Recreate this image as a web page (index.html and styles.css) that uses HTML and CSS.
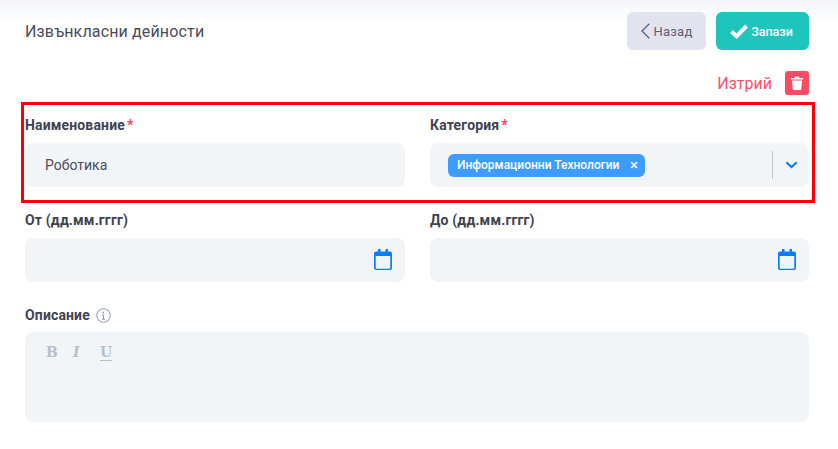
FILE: index.html
```html
<!DOCTYPE html>
<html lang="bg">
<head>
<meta charset="utf-8">
<title>Извънкласни дейности</title>
<link rel="stylesheet" href="styles.css">
</head>
<body>
<div class="page">
  <header class="top">
    <h1 class="title">Извънкласни дейности</h1>
    <div class="actions">
      <button class="btn btn-back" type="button">
        <svg width="9" height="16" viewBox="0 0 9 16"><path d="M8.300.8 1 8l7.300 7.200" fill="none" stroke="#5d5f70" stroke-width="1.300"/></svg>
        <span>Назад</span>
      </button>
      <button class="btn btn-save" type="button">
        <svg width="18" height="15" viewBox="0 0 18 15"><path d="M1.500 7.500 6.600 12.300 16.500 2" fill="none" stroke="#fff" stroke-width="4"/></svg>
        <span>Запази</span>
      </button>
    </div>
  </header>
  <div class="delete-row">
    <span class="delete-text">Изтрий</span>
    <span class="delete-icon">
      <svg width="12" height="14" viewBox="0 0 12 14"><path d="M0 2h3.500L4.300.6h3.400L8.500 2H12v1.500H0zM1 4.500h10l-.7 8.200q-.1 1.300-1.300 1.300H3q-1.200 0-1.300-1.300z" fill="#fff"/></svg>
    </span>
  </div>
  <section class="grid highlighted">
    <div class="field">
      <label class="label">Наименование<span class="req">*</span></label>
      <div class="control text-value">Роботика</div>
    </div>
    <div class="field">
      <label class="label">Категория<span class="req">*</span></label>
      <div class="control select">
        <span class="tag">Информационни Технологии<span class="tag-x">×</span></span>
        <span class="select-side">
          <svg width="13" height="8" viewBox="0 0 13 8"><path d="M1.300 1.300 6.500 6 11.700 1.300" fill="none" stroke="#0a7cff" stroke-width="2.200"/></svg>
        </span>
      </div>
    </div>
  </section>
  <section class="grid dates">
    <div class="field">
      <label class="label">От (дд.мм.гггг)</label>
      <div class="control date">
        <svg width="18" height="21" viewBox="0 0 18 21"><path d="M4 0h2.500v2.500h5V0H14v2.500h2a2 2 0 0 1 2 2v14.500a2 2 0 0 1-2 2H2a2 2 0 0 1-2-2V4.500a2 2 0 0 1 2-2h2zM1.700 7v11.800q0 1 1 1h12.600q1 0 1-1V7z" fill="#0a7cff"/></svg>
      </div>
    </div>
    <div class="field">
      <label class="label">До (дд.мм.гггг)</label>
      <div class="control date">
        <svg width="18" height="21" viewBox="0 0 18 21"><path d="M4 0h2.500v2.500h5V0H14v2.500h2a2 2 0 0 1 2 2v14.500a2 2 0 0 1-2 2H2a2 2 0 0 1-2-2V4.500a2 2 0 0 1 2-2h2zM1.700 7v11.800q0 1 1 1h12.600q1 0 1-1V7z" fill="#0a7cff"/></svg>
      </div>
    </div>
  </section>
  <section class="desc">
    <div class="label desc-label">
      Описание
      <svg width="15" height="15" viewBox="0 0 14 14"><circle cx="7" cy="7" r="6.300" fill="none" stroke="#9aa7bd" stroke-width="1"/><path d="M6 3.500h1.500V5H6zM5.500 6h2v4.200h1v.8h-3v-.8h1V6.800h-1z" fill="#8795ad"/></svg>
    </div>
    <div class="editor">
      <span class="tool tool-b">B</span>
      <span class="tool tool-i">I</span>
      <span class="tool tool-u">U</span>
    </div>
  </section>
</div>
</body>
</html>
```
FILE: styles.css
```css
* { box-sizing: border-box; }
html, body { margin: 0; padding: 0; }
body {
  width: 838px;
  height: 449px;
  overflow: hidden;
  background: #fff;
  font-family: Roboto, "Noto Sans", sans-serif;
  color: #40424f;
}
.page {
  height: 449px;
  padding: 12px 29px 0 25px;
  background: linear-gradient(#f5f6f8 0, #fff 22px);
}
.top {
  display: flex;
  justify-content: space-between;
  height: 38px;
}
.title {
  margin: 0;
  padding-top: 1px;
  font-size: 16px;
  font-weight: 400;
  line-height: 38px;
  letter-spacing: .15px;
  color: #4a4c5b;
}
.actions { display: flex; gap: 10px; }
.btn {
  display: flex;
  align-items: center;
  justify-content: center;
  height: 38px;
  border: 0;
  border-radius: 6px;
  font-family: inherit;
  padding: 0;
}
.btn-back {
  width: 79px;
  gap: 4px;
  background: #e1e3ee;
  color: #5d5f70;
  font-size: 13px;
  font-weight: 400;
  letter-spacing: .2px;
}
.btn-save {
  width: 93px;
  gap: 3px;
  padding-right: 2px;
  background: #1ec5bc;
  color: #fff;
  font-size: 12.5px;
  font-weight: 500;
}
.delete-row {
  display: flex;
  justify-content: flex-end;
  align-items: center;
  gap: 13px;
  margin-top: 21px;
  height: 24px;
}
.delete-text { font-size: 16px; color: #fb5067; }
.delete-icon {
  display: flex;
  align-items: center;
  justify-content: center;
  width: 24px;
  height: 24px;
  border-radius: 3px;
  background: #fb4b63;
}
.grid {
  display: grid;
  grid-template-columns: 380px 379px;
  column-gap: 25px;
}
.highlighted {
  height: 101px;
  margin: 7px -6px 0 -4px;
  padding: 12px 3px 0 1px;
  border: 3px solid #f00;
}
.dates { margin-top: 9px; }
.label {
  display: block;
  height: 16px;
  font-size: 14px;
  font-weight: 700;
  line-height: 16px;
  letter-spacing: .15px;
  color: #40424f;
}
.req { margin-left: 2px; color: #f5405a; }
.control {
  display: flex;
  align-items: center;
  height: 44px;
  margin-top: 10px;
  border-radius: 8px;
  background: #f2f5f8;
}
.text-value { padding-left: 20px; font-size: 14px; color: #4a4c5b; }
.select { padding-left: 18px; justify-content: space-between; }
.tag {
  display: flex;
  align-items: center;
  justify-content: space-between;
  width: 197px;
  height: 23px;
  padding: 0 7px 0 9px;
  border-radius: 6px;
  background: #3d9cff;
  color: #fff;
  font-size: 12px;
  font-weight: 500;
}
.tag-x { font-size: 15px; font-weight: 500; }
.select-side {
  display: flex;
  align-items: center;
  justify-content: center;
  width: 37px;
  height: 28px;
  border-left: 1px solid #c4c8cc;
}
.date { justify-content: flex-end; padding: 0 13px 2px 0; }
.desc { margin-top: 25px; }
.desc-label { display: flex; align-items: center; gap: 6px; }
.editor {
  display: flex;
  height: 90px;
  margin-top: 9px;
  padding: 11px 0 0 21px;
  border-radius: 8px;
  background: #f2f5f8;
}
.tool {
  width: 27px;
  font-family: "DejaVu Serif", "Liberation Serif", serif;
  font-size: 14px;
  font-weight: 700;
  line-height: 18px;
  color: #b8bfcc;
}
.tool-i { font-style: italic; }
.tool-u { text-decoration: underline; text-underline-offset: 3px; }
```
